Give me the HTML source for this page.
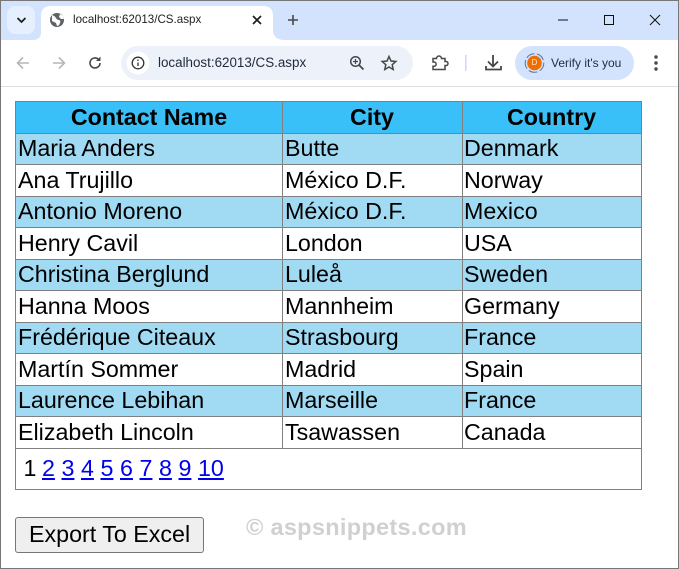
<!DOCTYPE html>
<html><head><meta charset="utf-8">
<style>
html,body{margin:0;padding:0;background:#fff}
body{width:679px;height:569px;position:relative;overflow:hidden;font-family:"Liberation Sans",sans-serif}
.a{position:absolute}
.t{position:absolute;white-space:nowrap;font-size:23.25px;line-height:30px;color:#000}
.h{font-weight:bold;text-align:center}
.l{position:absolute;background:#808080}
.r{position:absolute;left:16px;width:625px}
.ui{font-size:12.5px;white-space:nowrap;position:absolute;color:#1f1f1f}
a{color:#0000ee;text-decoration:underline}
</style></head><body>
<!-- chrome -->
<div class="a" style="left:0;top:0;width:679px;height:40px;background:#d3e3fd"></div>
<div class="a" style="left:7px;top:6px;width:28px;height:28px;border-radius:8px;background:#e6effe"></div>
<svg class="a" style="left:0;top:0" width="679" height="87">
<path d="M17.5 18l4 4 4-4" fill="none" stroke="#1f1f1f" stroke-width="1.8"/>
<path d="M0 87V52Q0 40 12 40H33Q41 40 41 32V16Q41 6 51 6H263Q273 6 273 16V30Q273 40 285 40H667Q679 40 679 52V87Z" fill="#fff"/>
<circle cx="57" cy="20" r="7" fill="#5f6368"/>
<path d="M52 15q3 1 4 3t3 2 1 3-3 3l-1-3-4-2zM60 14l3 2 1 3-3 0-2-2z" fill="#fff"/>
<path d="M253 16l8 8M261 16l-8 8" stroke="#1f1f1f" stroke-width="1.7" fill="none"/>
<path d="M293 15v10M288 20h10" stroke="#474747" stroke-width="1.6" fill="none"/>
<path d="M558 20h10" stroke="#111" stroke-width="1"/>
<rect x="604.500" y="15.500" width="9" height="9" fill="none" stroke="#111" stroke-width="1"/>
<path d="M650 15l10 10M660 15l-10 10" stroke="#111" stroke-width="1" fill="none"/>
<!-- nav -->
<path d="M29 63H18M23 57.500l-5.500 5.500 5.500 5.500" fill="none" stroke="#b5b7ba" stroke-width="1.6"/>
<path d="M53 63h11M59 57.500l5.500 5.500-5.500 5.500" fill="none" stroke="#b5b7ba" stroke-width="1.6"/>
<path d="M100 63a5 5 0 1 1-1.500-3.600" fill="none" stroke="#474747" stroke-width="1.6"/>
<path d="M100.500 56.500v4.500h-4.500z" fill="#474747"/>
<rect x="121" y="46" width="292" height="34" rx="17" fill="#ecf1fa"/>
<circle cx="138" cy="63" r="11.500" fill="#fff"/>
<circle cx="138" cy="63" r="5.800" fill="none" stroke="#333" stroke-width="1.300"/>
<path d="M138 62.500v3.500M138 59.500v1.500" stroke="#333" stroke-width="1.300"/>
<circle cx="355.500" cy="61.500" r="4.800" fill="none" stroke="#474747" stroke-width="1.500"/>
<path d="M359 65l4.500 4.500" stroke="#474747" stroke-width="1.800"/>
<path d="M353 61.500h5M355.500 59v5" stroke="#474747" stroke-width="1.200"/>
<path d="M389 56.500l2 4.500 4.800.5-3.600 3.200 1 4.800-4.200-2.500-4.200 2.500 1-4.800-3.600-3.200 4.800-.5z" fill="none" stroke="#474747" stroke-width="1.500"/>
<path d="M433 58.500h3.500a2.500 2.500 0 0 1 5 0h3.500v3h1a1.800 1.800 0 0 1 0 4h-1v4h-12v-3.200h1a2 2 0 0 0 0-4.300h-1z" fill="none" stroke="#474747" stroke-width="1.500"/>
<rect x="465" y="55" width="1.500" height="16" fill="#c6dafc"/>
<path d="M493 55v11M488 61.500l5 5 5-5" fill="none" stroke="#474747" stroke-width="1.800"/>
<path d="M486 66v3.500h15V66" fill="none" stroke="#474747" stroke-width="1.800"/>
<rect x="515" y="46" width="119" height="34" rx="17" fill="#d3e3fd"/>
<circle cx="534.500" cy="63" r="9.300" fill="none" stroke="#5b7299" stroke-width="1" stroke-dasharray="9 2.500"/>
<circle cx="534.500" cy="63" r="7.300" fill="#f06d00"/>
<circle cx="656" cy="57" r="1.700" fill="#474747"/><circle cx="656" cy="63" r="1.700" fill="#474747"/><circle cx="656" cy="69" r="1.700" fill="#474747"/>
</svg>
<div class="a" style="left:0;top:86px;width:679px;height:1px;background:#dedfe1"></div>
<div class="ui" style="left:73px;top:13px;font-size:11.6px;">localhost:62013/CS.aspx</div>
<div class="ui" style="left:158px;top:55px;font-size:13.400px;color:#1f2a3a">localhost:62013/CS.aspx</div>
<div class="ui" style="left:531.500px;top:58px;font-size:8px;color:#ffe8d0">D</div>
<div class="ui" style="left:551px;top:56px;font-size:12px;color:#1d2b4d">Verify it's you</div>

<!-- rows -->
<div class="r" style="top:102px;height:31px;background:#3ac0f8"></div>
<div class="r" style="top:134px;height:30px;background:#a0daf3"></div>
<div class="r" style="top:197px;height:30px;background:#a0daf3"></div>
<div class="r" style="top:260px;height:30px;background:#a0daf3"></div>
<div class="r" style="top:323px;height:30px;background:#a0daf3"></div>
<div class="r" style="top:386px;height:30px;background:#a0daf3"></div>
<!-- grid -->
<div class="l" style="left:15px;top:101px;width:627px;height:1px"></div>
<div class="l" style="left:15px;top:133px;width:627px;height:1px"></div>
<div class="l" style="left:15px;top:164px;width:627px;height:1px"></div>
<div class="l" style="left:15px;top:196px;width:627px;height:1px"></div>
<div class="l" style="left:15px;top:227px;width:627px;height:1px"></div>
<div class="l" style="left:15px;top:259px;width:627px;height:1px"></div>
<div class="l" style="left:15px;top:290px;width:627px;height:1px"></div>
<div class="l" style="left:15px;top:322px;width:627px;height:1px"></div>
<div class="l" style="left:15px;top:353px;width:627px;height:1px"></div>
<div class="l" style="left:15px;top:385px;width:627px;height:1px"></div>
<div class="l" style="left:15px;top:416px;width:627px;height:1px"></div>
<div class="l" style="left:15px;top:448px;width:627px;height:1px"></div>
<div class="l" style="left:15px;top:489px;width:627px;height:1px"></div>
<div class="l" style="left:15px;top:101px;width:1px;height:389px"></div>
<div class="l" style="left:641px;top:101px;width:1px;height:389px"></div>
<div class="l" style="left:282px;top:101px;width:1px;height:347px"></div>
<div class="l" style="left:462px;top:101px;width:1px;height:347px"></div>
<!-- header -->
<div class="t h" style="left:16px;width:266px;top:102px">Contact Name</div>
<div class="t h" style="left:283px;width:178px;top:102px">City</div>
<div class="t h" style="left:463px;width:177px;top:102px">Country</div>
<!-- body -->
<div class="t" style="left:18px;top:133px">Maria Anders</div><div class="t" style="left:285px;top:133px">Butte</div><div class="t" style="left:464px;top:133px">Denmark</div>
<div class="t" style="left:18px;top:165px">Ana Trujillo</div><div class="t" style="left:285px;top:165px">México D.F.</div><div class="t" style="left:464px;top:165px">Norway</div>
<div class="t" style="left:18px;top:196px">Antonio Moreno</div><div class="t" style="left:285px;top:196px">México D.F.</div><div class="t" style="left:464px;top:196px">Mexico</div>
<div class="t" style="left:18px;top:228px">Henry Cavil</div><div class="t" style="left:285px;top:228px">London</div><div class="t" style="left:464px;top:228px">USA</div>
<div class="t" style="left:18px;top:259px">Christina Berglund</div><div class="t" style="left:285px;top:259px">Luleå</div><div class="t" style="left:464px;top:259px">Sweden</div>
<div class="t" style="left:18px;top:291px">Hanna Moos</div><div class="t" style="left:285px;top:291px">Mannheim</div><div class="t" style="left:464px;top:291px">Germany</div>
<div class="t" style="left:18px;top:322px">Frédérique Citeaux</div><div class="t" style="left:285px;top:322px">Strasbourg</div><div class="t" style="left:464px;top:322px">France</div>
<div class="t" style="left:18px;top:354px">Martín Sommer</div><div class="t" style="left:285px;top:354px">Madrid</div><div class="t" style="left:464px;top:354px">Spain</div>
<div class="t" style="left:18px;top:385px">Laurence Lebihan</div><div class="t" style="left:285px;top:385px">Marseille</div><div class="t" style="left:464px;top:385px">France</div>
<div class="t" style="left:18px;top:417px">Elizabeth Lincoln</div><div class="t" style="left:285px;top:417px">Tsawassen</div><div class="t" style="left:464px;top:417px">Canada</div>
<!-- pager -->
<div class="t" style="left:23.500px;top:453px">1</div>
<div class="t" style="left:42px;top:453px"><a>2</a></div>
<div class="t" style="left:61.500px;top:453px"><a>3</a></div>
<div class="t" style="left:81px;top:453px"><a>4</a></div>
<div class="t" style="left:100.500px;top:453px"><a>5</a></div>
<div class="t" style="left:120px;top:453px"><a>6</a></div>
<div class="t" style="left:139.500px;top:453px"><a>7</a></div>
<div class="t" style="left:159px;top:453px"><a>8</a></div>
<div class="t" style="left:178.500px;top:453px"><a>9</a></div>
<div class="t" style="left:198px;top:453px"><a>10</a></div>
<!-- button -->
<div class="a" style="left:15px;top:517px;width:187px;height:34px;background:#efefef;border:1px solid #767676;border-radius:3px"></div>
<div class="t" style="left:29px;top:519px">Export To Excel</div>
<div class="t" style="left:246px;top:512px;font-weight:bold;color:#d0d0d0;letter-spacing:.3px;font-size:23.500px">© aspsnippets.com</div>
<!-- window border -->
<div class="a" style="left:0;top:0;width:677px;height:567px;border:1px solid #777"></div>
</body></html>
